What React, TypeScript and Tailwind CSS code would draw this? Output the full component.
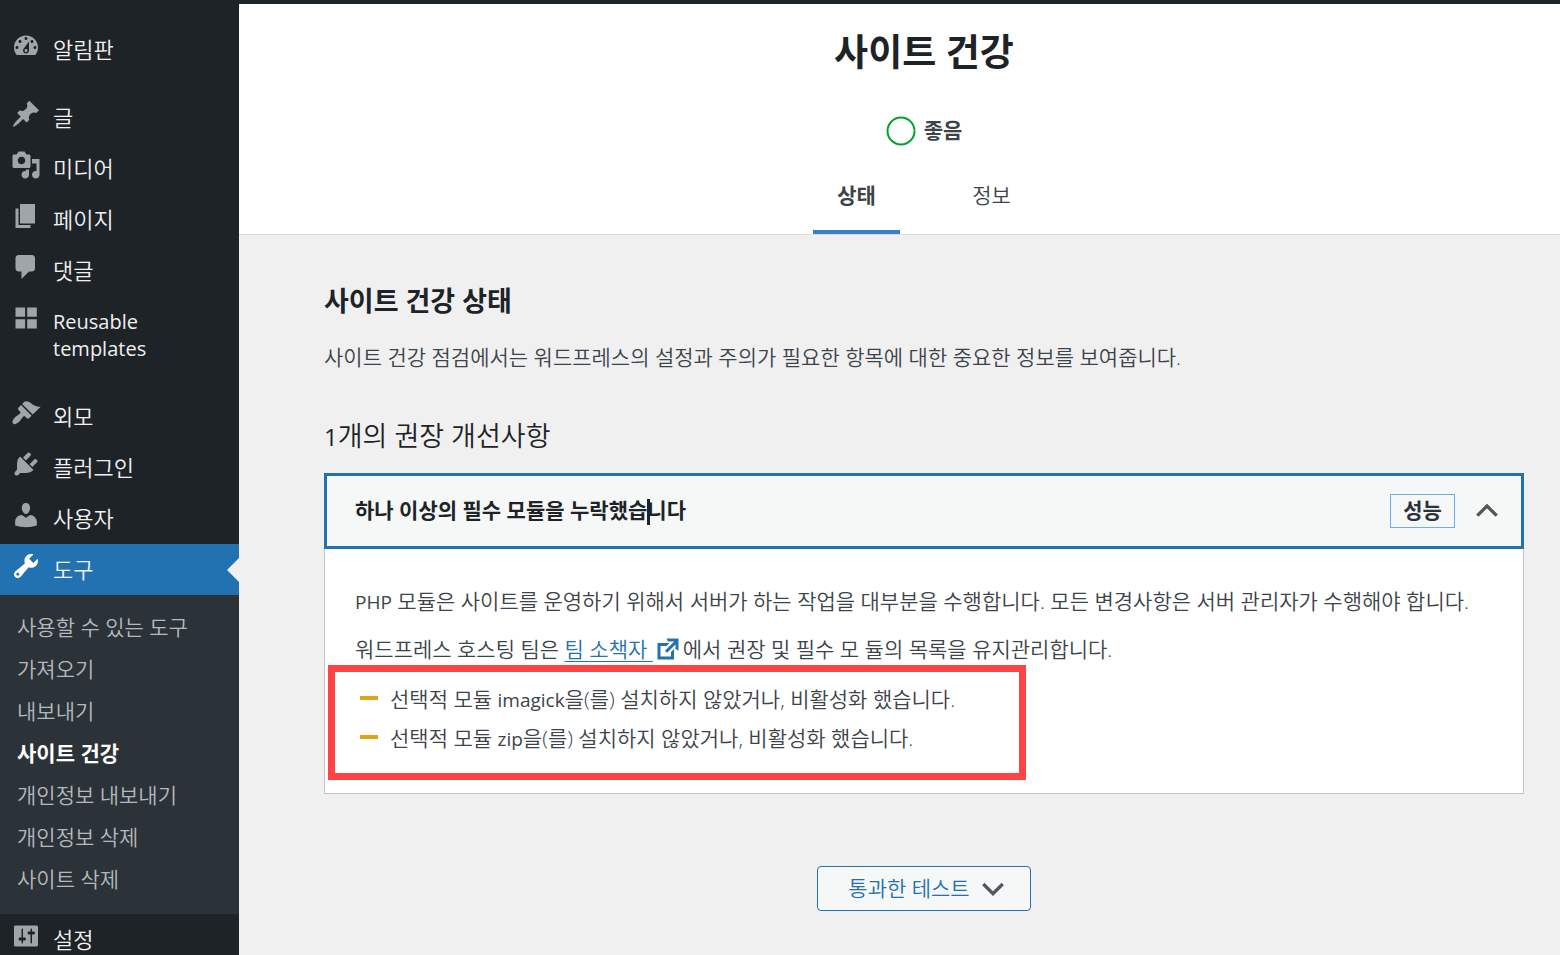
import { useState } from 'react';
import clsx from 'clsx';

interface MenuItem {
  label: string;
  icon: string;
  current?: boolean;
  latin?: boolean;
  spaceBefore?: boolean;
}

const icons: Record<string, string> = {
  dashboard:
    'M3.76 16h12.48c1.1-1.37 1.76-3.11 1.76-5 0-4.42-3.58-8-8-8s-8 3.58-8 8c0 1.89.66 3.63 1.76 5zM10 4c.55 0 1 .45 1 1s-.45 1-1 1-1-.45-1-1 .45-1 1-1zM6 6c.55 0 1 .45 1 1s-.45 1-1 1-1-.45-1-1 .45-1 1-1zm8 0c.55 0 1 .45 1 1s-.45 1-1 1-1-.45-1-1 .45-1 1-1zm-5.37 5.55L12 7v6c0 1.1-.9 2-2 2s-2-.9-2-2c0-.57.24-1.08.63-1.45zM4 10c.55 0 1 .45 1 1s-.45 1-1 1-1-.45-1-1 .45-1 1-1zm12 0c.55 0 1 .45 1 1s-.45 1-1 1-1-.45-1-1 .45-1 1-1zm-5 3c0-.55-.45-1-1-1s-1 .45-1 1 .45 1 1 1 1-.45 1-1z',
  post: 'M10.44 3.02l1.82-1.82 6.36 6.35-1.83 1.82c-1.05-.68-2.48-.57-3.41.36l-.75.75c-.92.93-1.04 2.35-.35 3.41l-1.83 1.82-2.41-2.41-2.8 2.79c-.42.42-3.38 2.71-3.8 2.29s1.86-3.39 2.28-3.81l2.79-2.79L4.1 9.36l1.83-1.82c1.05.69 2.48.57 3.4-.36l.75-.75c.93-.92 1.05-2.35.36-3.41z',
  media:
    'M13 11V4c0-.55-.45-1-1-1h-1.67L9 1H5L3.67 3H2c-.55 0-1 .45-1 1v7c0 .55.45 1 1 1h10c.55 0 1-.45 1-1zM7 4.5c1.38 0 2.5 1.12 2.5 2.5S8.38 9.5 7 9.5 4.5 8.38 4.5 7 5.62 4.5 7 4.5zM14 6h5v10.5c0 1.38-1.12 2.5-2.5 2.5S14 17.88 14 16.5s1.12-2.5 2.5-2.5c.17 0 .34.02.5.05V9h-3V6zm-4 8.05V13h2v3.5c0 1.38-1.12 2.5-2.5 2.5S7 17.88 7 16.5 8.12 14 9.5 14c.17 0 .34.02.5.05z',
  page: 'M6 15V2h10v13H6zm-1 1h8v2H3V5h2v11z',
  comments: 'M5 2h9c1.1 0 2 .9 2 2v7c0 1.1-.9 2-2 2h-2l-5 5v-5H5c-1.1 0-2-.9-2-2V4c0-1.1.9-2 2-2z',
  grid: 'M3 3h6.4v6.2H3zM10.8 3h6.4v6.2h-6.4zM3 10.8h6.4V17H3zM10.8 10.8h6.4V17h-6.4z',
  appearance:
    'M14.48 11.06L7.41 3.99l1.5-1.5c.5-.56 2.3-.47 3.51.32 1.21.8 1.43 1.28 2.91 2.1 1.18.64 2.45 1.26 4.45.85zm-.71.71L6.7 4.7 4.93 6.47c-.39.39-.39 1.02 0 1.41l1.06 1.06c.39.39.39 1.03 0 1.42-.6.6-1.43 1.11-2.21 1.69-.35.26-.7.53-1.01.84C1.43 14.23.4 16.08 1.4 17.07c.99 1 2.84-.03 4.18-1.36.31-.31.58-.66.85-1.02.57-.78 1.08-1.61 1.69-2.21.39-.39 1.02-.39 1.41 0l1.06 1.06c.39.39 1.02.39 1.41 0z',
  plugins:
    'M13.11 4.36L9.87 7.6 8 5.73l3.24-3.24c.35-.34 1.05-.2 1.56.32.52.51.66 1.21.31 1.55zm-8 1.77l.91-1.12 9.01 9.01-1.19.84c-.71.71-2.63 1.16-3.82 1.16H6.14L4.9 17.26c-.59.59-1.54.59-2.12 0-.59-.58-.59-1.53 0-2.12l1.24-1.24v-3.88c0-1.13.4-3.19 1.09-3.89zm7.26 3.97l3.24-3.24c.34-.35 1.04-.21 1.55.31.52.51.66 1.21.31 1.55l-3.24 3.25z',
  users:
    'M10 9.25c-2.27 0-2.73-3.44-2.73-3.44C7 4.02 7.82 2 9.97 2c2.16 0 2.98 2.02 2.71 3.81 0 0-.41 3.44-2.68 3.44zm0 2.57L12.72 10c2.39 0 4.52 2.33 4.52 4.53v2.49s-3.65 1.13-7.24 1.13c-3.65 0-7.24-1.13-7.24-1.13v-2.49c0-2.25 1.94-4.48 4.47-4.48z',
  tools:
    'M16.68 9.77c-1.34 1.34-3.3 1.67-4.95.99l-5.41 6.52c-.99.99-2.59.99-3.58 0s-.99-2.59 0-3.57l6.52-5.42c-.68-1.65-.35-3.61.99-4.95 1.28-1.28 3.12-1.62 4.72-1.06l-2.89 2.89 2.82 2.82 2.86-2.87c.53 1.58.18 3.39-1.08 4.65zM3.81 16.21c.4.39 1.04.39 1.43 0 .4-.4.4-1.04 0-1.43-.39-.4-1.03-.4-1.43 0-.39.39-.39 1.03 0 1.43z',
  settings:
    'M18 16V4c0-.55-.45-1-1-1H3c-.55 0-1 .45-1 1v12c0 .55.45 1 1 1h14c.55 0 1-.45 1-1zM8 11h1c.55 0 1 .45 1 1s-.45 1-1 1H8v1.5c0 .28-.22.5-.5.5s-.5-.22-.5-.5V13H6c-.55 0-1-.45-1-1s.45-1 1-1h1V5.5c0-.28.22-.5.5-.5s.5.22.5.5V11zm5-2h-1c-.55 0-1-.45-1-1s.45-1 1-1h1V5.5c0-.28.22-.5.5-.5s.5.22.5.5V7h1c.55 0 1 .45 1 1s-.45 1-1 1h-1v5.5c0 .28-.22.5-.5.5s-.5-.22-.5-.5V9z',
  external: 'M9 3h8v8l-2-1V6.92l-5.6 5.59-1.41-1.41L14.08 5H10zm3 12v-3l2-2v7H3V6h8L9 8H5v7h7z',
};

const menuItems: MenuItem[] = [
  { label: '알림판', icon: 'dashboard' },
  { label: '글', icon: 'post', spaceBefore: true },
  { label: '미디어', icon: 'media' },
  { label: '페이지', icon: 'page' },
  { label: '댓글', icon: 'comments' },
  { label: 'Reusable templates', icon: 'grid', latin: true },
  { label: '외모', icon: 'appearance', spaceBefore: true },
  { label: '플러그인', icon: 'plugins' },
  { label: '사용자', icon: 'users' },
  { label: '도구', icon: 'tools', current: true },
  { label: '설정', icon: 'settings' },
];

const toolLinks = [
  '사용할 수 있는 도구',
  '가져오기',
  '내보내기',
  '사이트 건강',
  '개인정보 내보내기',
  '개인정보 삭제',
  '사이트 삭제',
];

const missingModules = ['imagick', 'zip'];

function Dashicon({ name, className }: { name: string; className?: string }) {
  return (
    <svg viewBox="0 0 20 20" fill="currentColor" aria-hidden="true" className={clsx('size-[30px] shrink-0', className)}>
      <path fillRule="evenodd" d={icons[name]} />
    </svg>
  );
}

function Chevron({ up = false }: { up?: boolean }) {
  return (
    <svg viewBox="0 0 22 14" fill="none" stroke="#50575e" strokeWidth="3.3" aria-hidden="true" className="h-[14px] w-[22px]">
      <path d={up ? 'M1.3 11.7 11 2l9.7 9.7' : 'M1.3 2 11 11.7 20.7 2'} />
    </svg>
  );
}

function ToolsSubmenu() {
  return (
    <ul className="bg-[#2c3338] pt-[11px] pb-[14px] text-[21px] leading-[42px]">
      {toolLinks.map((label) => (
        <li key={label}>
          <a
            href="#"
            className={clsx('block pl-[17px]', label === '사이트 건강' ? 'font-bold text-white' : 'text-[#b4b9be]')}
          >
            {label}
          </a>
        </li>
      ))}
    </ul>
  );
}

function AdminMenu() {
  return (
    <nav className="w-[239px] shrink-0 bg-[#1d2327] pt-5">
      <ul>
        {menuItems.map((item) => (
          <li key={item.label} className={clsx(item.spaceBefore && 'mt-[17px]')}>
            <a
              href="#"
              className={clsx(
                'relative flex items-start pl-[11px] text-[#f0f0f1]',
                item.current && 'bg-[#2271b1]',
              )}
            >
              <Dashicon name={item.icon} className={clsx('mt-[7px]', item.current ? 'text-white' : 'text-[#a0a5aa]')} />
              <span
                className={clsx(
                  'w-[140px] py-3 pl-3 leading-[27px]',
                  item.latin ? 'text-[20px] font-normal' : 'text-[22px]',
                )}
              >
                {item.label}
              </span>
              {item.current && (
                <span className="absolute top-1/2 right-0 -translate-y-1/2 border-y-[12px] border-r-[12px] border-y-transparent border-r-[#f0f0f1]" />
              )}
            </a>
            {item.current && <ToolsSubmenu />}
          </li>
        ))}
      </ul>
    </nav>
  );
}

function HealthHeader() {
  return (
    <header className="flex flex-col items-center border-b border-[#dcdcde] bg-white pt-6 pr-9 pl-[85px]">
      <h1 className="text-[37px] leading-[48px] font-bold text-[#1d2327]">사이트 건강</h1>
      <div className="mt-[39px] flex h-8 items-center gap-2">
        <svg viewBox="0 0 30 30" fill="none" aria-hidden="true" className="size-[30px]">
          <circle cx="15" cy="15" r="13.5" stroke="#00a32a" strokeWidth="2" strokeDasharray="84 1" />
        </svg>
        <span className="text-[21px] font-bold text-[#3c434a]">좋음</span>
      </div>
      <nav className="mt-8 flex gap-12 text-center text-[21px] leading-8 text-[#3c434a]">
        <a href="#" className="w-[87px] border-b-4 border-[#3582c4] pb-[19px] font-bold">
          상태
        </a>
        <a href="#" className="w-[87px] border-b-4 border-transparent pb-[19px]">
          정보
        </a>
      </nav>
    </header>
  );
}

function ModuleIssue() {
  const [open, setOpen] = useState(true);

  return (
    <div className="mt-[17px]">
      <h4>
        <button
          type="button"
          aria-expanded={open}
          onClick={() => setOpen(!open)}
          className="flex h-[76px] w-full items-center border-3 border-[#2271b1] bg-[#f6f7f7] pr-[23px] pl-7 text-left text-[21px] font-bold text-[#1d2327]"
        >
          <span className="grow">
            하나 이상의 필수 모듈을 누락했습
            <span className="relative">
              <span className="absolute top-[3px] left-0 h-[26px] w-[3px] bg-[#1d2327]" />
              니다
            </span>
          </span>
          <span className="mr-[21px] flex h-[34px] w-[65px] items-center justify-center border border-[#72aee6] text-[#2c3338]">
            성능
          </span>
          <Chevron up={open} />
        </button>
      </h4>
      {open && (
        <div className="border border-t-0 border-[#c3c4c7] bg-white pt-9 pb-[13px] text-[21px] text-[#3c434a]">
          <p className="mb-4 px-[30px] leading-8">
            <span className="text-[19px] leading-none font-normal">PHP</span> 모듈은 사이트를 운영하기 위해서 서버가 하는
            작업을 대부분을 수행합니다. 모든 변경사항은 서버 관리자가 수행해야 합니다.
          </p>
          <p className="flex h-8 items-center px-[30px] leading-8 whitespace-pre">
            워드프레스 호스팅 팀은{' '}
            <a href="#" className="flex items-center text-[#2271b1]">
              <span className="underline decoration-1 underline-offset-4">팀 소책자 </span>
              <Dashicon name="external" />
            </a>
            에서 권장 및 필수 모 듈의 목록을 유지관리합니다.
          </p>
          <ul className="ml-[3px] w-[698px] border-[7px] border-[#ff4343] pt-2 pb-[15px]">
            {missingModules.map((name) => (
              <li key={name} className="flex items-center pl-[25px] leading-[39px]">
                <span className="mr-3 mb-1 h-1 w-[18px] bg-[#dba617]" />
                <span>
                  선택적 모듈 <span className="text-[19px] leading-none font-normal">{name}</span>을(를) 설치하지
                  않았거나, 비활성화 했습니다.
                </span>
              </li>
            ))}
          </ul>
        </div>
      )}
    </div>
  );
}

export default function App() {
  return (
    <div className="flex min-h-screen flex-col bg-[#f0f0f1] font-['Open_Sans','Noto_Sans_CJK_KR',sans-serif] font-[350]">
      <div className="h-1 bg-[#1d2327]" />
      <div className="flex grow">
        <AdminMenu />
        <div className="min-w-0 grow">
          <HealthHeader />
          <main className="pt-[46px] pr-9 pl-[85px]">
            <h2 className="text-[27px] leading-10 font-bold text-[#1d2327]">사이트 건강 상태</h2>
            <p className="mt-5 text-[21px] leading-8 text-[#3c434a]">
              사이트 건강 점검에서는 워드프레스의 설정과 주의가 필요한 항목에 대한 중요한 정보를 보여줍니다.
            </p>
            <h3 className="mt-[43px] text-[27px] leading-10 font-[350] text-[#1d2327]">
              <span className="text-[24px] leading-none font-normal">1</span>개의 권장 개선사항
            </h3>
            <ModuleIssue />
            <div className="mt-[72px] flex justify-center">
              <button
                type="button"
                className="flex h-[45px] w-[214px] items-center justify-center gap-3 rounded border border-[#2271b1] bg-[#f6f7f7] pl-1 text-[21px] text-[#2271b1]"
              >
                통과한 테스트
                <Chevron />
              </button>
            </div>
          </main>
        </div>
      </div>
    </div>
  );
}
